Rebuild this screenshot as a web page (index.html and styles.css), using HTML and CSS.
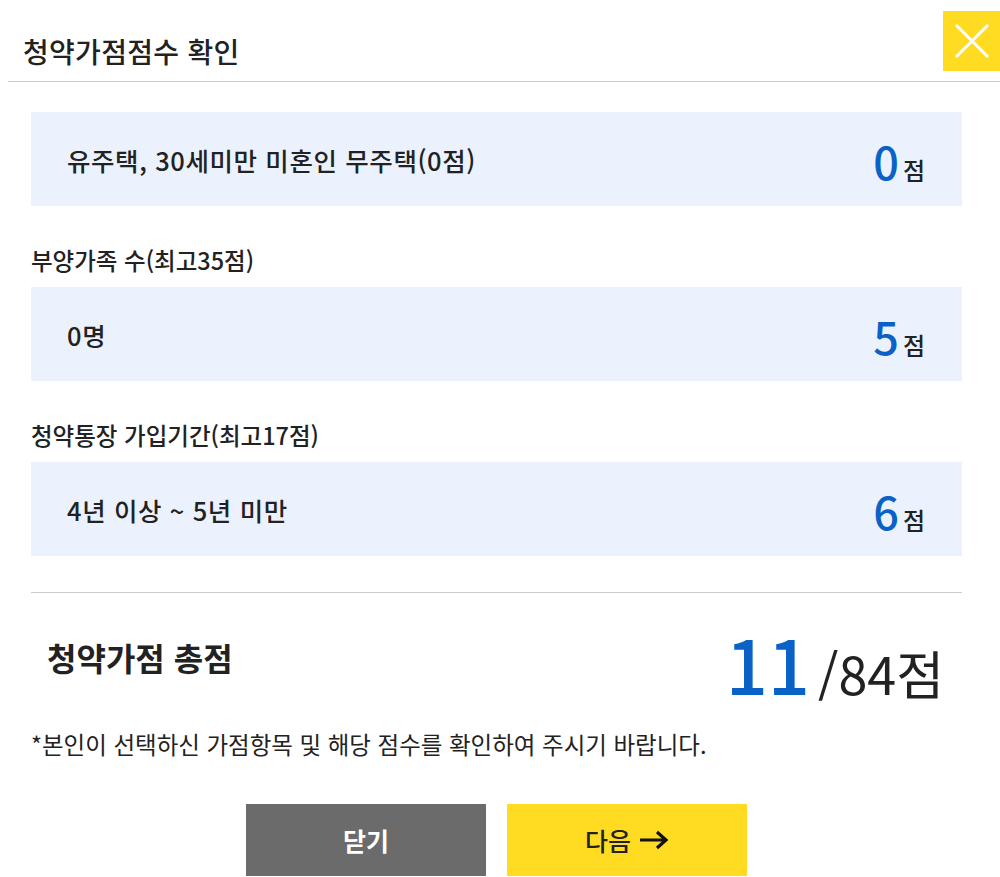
FILE: index.html
```html
<!DOCTYPE html>
<html lang="ko">
<head>
    <meta charset="UTF-8">
    <meta name="viewport" content="width=device-width, initial-scale=1.0">
    <title>청약가점점수 확인</title>
    <link rel="stylesheet" href="styles.css">
</head>
<body>
    <div class="popup">
        <div class="popup-head">
            <h2>청약가점점수 확인</h2>
            <button class="btn-close" aria-label="닫기">
                <svg width="36" height="36" viewBox="0 0 36 36">
                    <path d="M2 2L34 34M34 2L2 34" stroke="#fff" stroke-width="3" fill="none"/>
                </svg>
            </button>
        </div>

        <div class="popup-body">
            <div class="score-row">
                <span class="item">유주택, 30세미만 미혼인 무주택(0점)</span>
                <span class="point"><em>0</em>점</span>
            </div>

            <p class="label">부양가족 수(최고35점)</p>
            <div class="score-row">
                <span class="item">0명</span>
                <span class="point"><em>5</em>점</span>
            </div>

            <p class="label">청약통장 가입기간(최고17점)</p>
            <div class="score-row">
                <span class="item">4년 이상 ~ 5년 미만</span>
                <span class="point"><em>6</em>점</span>
            </div>

            <div class="total">
                <strong>청약가점 총점</strong>
                <span class="total-point"><em>11</em>/84점</span>
            </div>

            <p class="notice">*본인이 선택하신 가점항목 및 해당 점수를 확인하여 주시기 바랍니다.</p>

            <div class="btn-area">
                <button class="btn btn-gray">닫기</button>
                <button class="btn btn-yellow">다음
                    <svg class="arrow" width="30" height="20" viewBox="0 0 30 20">
                        <path d="M1 10H27M18 2L27 10L18 18" stroke="#111" stroke-width="3.2" fill="none"/>
                    </svg>
                </button>
            </div>
        </div>
    </div>
</body>
</html>
```

FILE: styles.css
```css
body {
    font-family: "Noto Sans CJK KR", "Noto Sans", sans-serif;
    color: #222;
    background-color: #fff;
    margin: 0;
}
.popup {
    position: relative;
    width: 1000px;
}
.popup-head {
    margin-left: 8px;
    height: 82px;
    box-sizing: border-box;
    padding-top: 20px;
    border-bottom: 1px solid #ccc;
    display: flex;
    align-items: center;
}
.popup-head h2 {
    margin: 0 0 0 15px;
    font-size: 28px;
    font-weight: 500;
    letter-spacing: 0.3px;
}
.btn-close {
    position: absolute;
    top: 11px;
    right: 0;
    width: 57px;
    height: 60px;
    border: none;
    padding: 0;
    background-color: #ffdc22;
    display: flex;
    align-items: center;
    justify-content: center;
}
.popup-body {
    padding: 30px 38px 0 31px;
}
.score-row {
    height: 94px;
    box-sizing: border-box;
    padding: 0 37px 0 36px;
    background-color: #ebf2fd;
    display: flex;
    align-items: center;
    justify-content: space-between;
}
.score-row .item {
    font-size: 25.5px;
    font-weight: 500;
    letter-spacing: 0.6px;
}
.point {
    font-size: 24px;
    font-weight: 500;
    display: flex;
    align-items: baseline;
    margin-top: 6px;
}
.point em {
    font-style: normal;
    font-size: 45px;
    font-weight: 500;
    color: #0b62c6;
    margin-right: 4px;
    line-height: 1;
}
.label {
    margin: 0;
    height: 81px;
    box-sizing: border-box;
    padding-top: 38px;
    font-size: 23.5px;
    font-weight: 500;
    line-height: 32px;
}
.total {
    margin-top: 36px;
    border-top: 1px solid #ccc;
    height: 128px;
    box-sizing: border-box;
    padding: 0 18px 0 16px;
    display: flex;
    align-items: center;
    justify-content: space-between;
}
.total strong {
    font-size: 32px;
    font-weight: 700;
}
.total-point {
    font-size: 52px;
    font-weight: 400;
    line-height: 1;
    display: flex;
    align-items: baseline;
    margin-top: 12px;
}
.total-point em {
    font-style: normal;
    font-size: 74px;
    font-weight: 500;
    color: #0b62c6;
    margin-right: 8px;
}
.notice {
    margin: 7px 0 0;
    font-size: 23.5px;
    line-height: 34px;
}
.btn-area {
    margin-top: 43px;
    display: flex;
    justify-content: center;
    gap: 21px;
}
.btn {
    width: 240px;
    height: 72px;
    border: none;
    font-family: inherit;
    font-size: 25px;
    font-weight: 700;
    cursor: pointer;
    display: flex;
    align-items: center;
    justify-content: center;
    gap: 8px;
}
.btn-gray {
    background-color: #6b6b6b;
    color: #fff;
}
.btn-yellow {
    background-color: #ffdc22;
    color: #222;
    font-weight: 500;
}
```
